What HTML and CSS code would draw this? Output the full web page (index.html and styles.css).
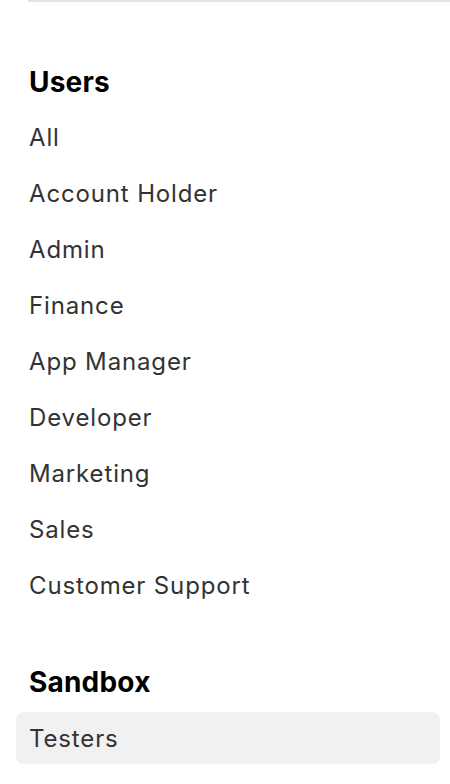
FILE: index.html
```html
<!DOCTYPE html>
<html lang="en">

<head>
    <meta charset="UTF-8">
    <meta name="viewport" content="width=device-width, initial-scale=1.0">
    <title>Users and Access</title>
    <link rel="stylesheet" href="styles.css">
</head>

<body>
    <div class="sidebar">
        <div class="top-rule"></div>

        <!--users group-->
        <div class="nav-group first">
            <h2 class="nav-title">Users</h2>
            <a class="nav-item" href="#">All</a>
            <a class="nav-item" href="#">Account Holder</a>
            <a class="nav-item" href="#">Admin</a>
            <a class="nav-item" href="#">Finance</a>
            <a class="nav-item" href="#">App Manager</a>
            <a class="nav-item" href="#">Developer</a>
            <a class="nav-item" href="#">Marketing</a>
            <a class="nav-item" href="#">Sales</a>
            <a class="nav-item" href="#">Customer Support</a>
        </div>

        <!--sandbox group-->
        <div class="nav-group">
            <h2 class="nav-title">Sandbox</h2>
            <a class="nav-item selected" href="#">Testers</a>
        </div>
    </div>
</body>

</html>
```

FILE: styles.css
```css
html,
body {
    margin: 0;
    background: #ffffff;
}

body {
    font-family: Inter, "Liberation Sans", sans-serif;
    overflow: hidden;
}

.sidebar {
    padding: 0 10px 0 16px;
}

.top-rule {
    height: 2px;
    background: #e5e5e5;
    margin: 0 -10px 0 12px;
}

.nav-group {
    margin-top: 54px;
}

.nav-group.first {
    margin-top: 63px;
}

.nav-title {
    margin: 0 0 12px;
    padding: 0 13px;
    font-size: 28px;
    font-weight: 700;
    line-height: 34px;
    color: #000000;
    letter-spacing: 0.2px;
}

.nav-group + .nav-group .nav-title {
    margin-bottom: 13px;
}

.nav-item {
    display: block;
    height: 52px;
    line-height: 53px;
    margin-bottom: 4px;
    padding: 0 13px;
    font-size: 24px;
    color: #333333;
    text-decoration: none;
    letter-spacing: 0.85px;
    border-radius: 8px;
}

.nav-item.selected {
    background: #f1f1f1;
}
```
